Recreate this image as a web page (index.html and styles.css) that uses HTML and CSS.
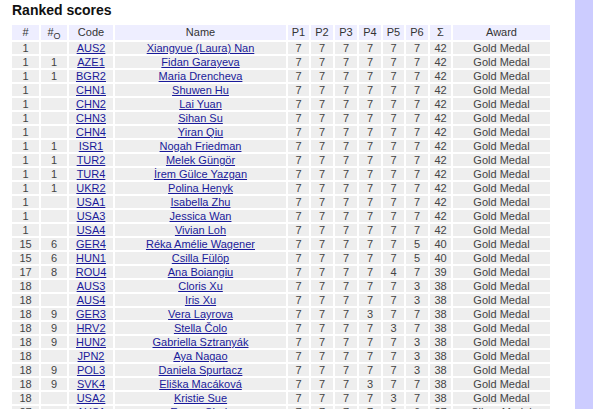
FILE: index.html
```html
<!DOCTYPE html>
<html lang="en">
<head>
<meta charset="utf-8">
<title>Ranked scores</title>
<link rel="stylesheet" href="styles.css">
</head>
<body>
<div class="page">
  <main class="main">
    <h2 class="title">Ranked scores</h2>
    <table class="scores">
      <colgroup>
        <col class="w-rank"><col class="w-rank-o"><col class="w-code"><col class="w-name">
        <col class="w-p1"><col class="w-p"><col class="w-p"><col class="w-p"><col class="w-p5"><col class="w-p"><col class="w-sum"><col class="w-award">
      </colgroup>
      <thead>
        <tr><th>#</th><th>#<sub>O</sub></th><th>Code</th><th>Name</th><th>P1</th><th>P2</th><th>P3</th><th>P4</th><th>P5</th><th>P6</th><th>Σ</th><th>Award</th></tr>
      </thead>
      <tbody>
        <tr><td>1</td><td></td><td><a href="#">AUS2</a></td><td><a href="#">Xiangyue (Laura) Nan</a></td><td>7</td><td>7</td><td>7</td><td>7</td><td>7</td><td>7</td><td>42</td><td>Gold Medal</td></tr>
        <tr><td>1</td><td>1</td><td><a href="#">AZE1</a></td><td><a href="#">Fidan Garayeva</a></td><td>7</td><td>7</td><td>7</td><td>7</td><td>7</td><td>7</td><td>42</td><td>Gold Medal</td></tr>
        <tr><td>1</td><td>1</td><td><a href="#">BGR2</a></td><td><a href="#">Maria Drencheva</a></td><td>7</td><td>7</td><td>7</td><td>7</td><td>7</td><td>7</td><td>42</td><td>Gold Medal</td></tr>
        <tr><td>1</td><td></td><td><a href="#">CHN1</a></td><td><a href="#">Shuwen Hu</a></td><td>7</td><td>7</td><td>7</td><td>7</td><td>7</td><td>7</td><td>42</td><td>Gold Medal</td></tr>
        <tr><td>1</td><td></td><td><a href="#">CHN2</a></td><td><a href="#">Lai Yuan</a></td><td>7</td><td>7</td><td>7</td><td>7</td><td>7</td><td>7</td><td>42</td><td>Gold Medal</td></tr>
        <tr><td>1</td><td></td><td><a href="#">CHN3</a></td><td><a href="#">Sihan Su</a></td><td>7</td><td>7</td><td>7</td><td>7</td><td>7</td><td>7</td><td>42</td><td>Gold Medal</td></tr>
        <tr><td>1</td><td></td><td><a href="#">CHN4</a></td><td><a href="#">Yiran Qiu</a></td><td>7</td><td>7</td><td>7</td><td>7</td><td>7</td><td>7</td><td>42</td><td>Gold Medal</td></tr>
        <tr><td>1</td><td>1</td><td><a href="#">ISR1</a></td><td><a href="#">Nogah Friedman</a></td><td>7</td><td>7</td><td>7</td><td>7</td><td>7</td><td>7</td><td>42</td><td>Gold Medal</td></tr>
        <tr><td>1</td><td>1</td><td><a href="#">TUR2</a></td><td><a href="#">Melek Güngör</a></td><td>7</td><td>7</td><td>7</td><td>7</td><td>7</td><td>7</td><td>42</td><td>Gold Medal</td></tr>
        <tr><td>1</td><td>1</td><td><a href="#">TUR4</a></td><td><a href="#">İrem Gülce Yazgan</a></td><td>7</td><td>7</td><td>7</td><td>7</td><td>7</td><td>7</td><td>42</td><td>Gold Medal</td></tr>
        <tr><td>1</td><td>1</td><td><a href="#">UKR2</a></td><td><a href="#">Polina Henyk</a></td><td>7</td><td>7</td><td>7</td><td>7</td><td>7</td><td>7</td><td>42</td><td>Gold Medal</td></tr>
        <tr><td>1</td><td></td><td><a href="#">USA1</a></td><td><a href="#">Isabella Zhu</a></td><td>7</td><td>7</td><td>7</td><td>7</td><td>7</td><td>7</td><td>42</td><td>Gold Medal</td></tr>
        <tr><td>1</td><td></td><td><a href="#">USA3</a></td><td><a href="#">Jessica Wan</a></td><td>7</td><td>7</td><td>7</td><td>7</td><td>7</td><td>7</td><td>42</td><td>Gold Medal</td></tr>
        <tr><td>1</td><td></td><td><a href="#">USA4</a></td><td><a href="#">Vivian Loh</a></td><td>7</td><td>7</td><td>7</td><td>7</td><td>7</td><td>7</td><td>42</td><td>Gold Medal</td></tr>
        <tr><td>15</td><td>6</td><td><a href="#">GER4</a></td><td><a href="#">Réka Amélie Wagener</a></td><td>7</td><td>7</td><td>7</td><td>7</td><td>7</td><td>5</td><td>40</td><td>Gold Medal</td></tr>
        <tr><td>15</td><td>6</td><td><a href="#">HUN1</a></td><td><a href="#">Csilla Fülöp</a></td><td>7</td><td>7</td><td>7</td><td>7</td><td>7</td><td>5</td><td>40</td><td>Gold Medal</td></tr>
        <tr><td>17</td><td>8</td><td><a href="#">ROU4</a></td><td><a href="#">Ana Boiangiu</a></td><td>7</td><td>7</td><td>7</td><td>7</td><td>4</td><td>7</td><td>39</td><td>Gold Medal</td></tr>
        <tr><td>18</td><td></td><td><a href="#">AUS3</a></td><td><a href="#">Cloris Xu</a></td><td>7</td><td>7</td><td>7</td><td>7</td><td>7</td><td>3</td><td>38</td><td>Gold Medal</td></tr>
        <tr><td>18</td><td></td><td><a href="#">AUS4</a></td><td><a href="#">Iris Xu</a></td><td>7</td><td>7</td><td>7</td><td>7</td><td>7</td><td>3</td><td>38</td><td>Gold Medal</td></tr>
        <tr><td>18</td><td>9</td><td><a href="#">GER3</a></td><td><a href="#">Vera Layrova</a></td><td>7</td><td>7</td><td>7</td><td>3</td><td>7</td><td>7</td><td>38</td><td>Gold Medal</td></tr>
        <tr><td>18</td><td>9</td><td><a href="#">HRV2</a></td><td><a href="#">Stella Čolo</a></td><td>7</td><td>7</td><td>7</td><td>7</td><td>3</td><td>7</td><td>38</td><td>Gold Medal</td></tr>
        <tr><td>18</td><td>9</td><td><a href="#">HUN2</a></td><td><a href="#">Gabriella Sztranyák</a></td><td>7</td><td>7</td><td>7</td><td>7</td><td>7</td><td>3</td><td>38</td><td>Gold Medal</td></tr>
        <tr><td>18</td><td></td><td><a href="#">JPN2</a></td><td><a href="#">Aya Nagao</a></td><td>7</td><td>7</td><td>7</td><td>7</td><td>7</td><td>3</td><td>38</td><td>Gold Medal</td></tr>
        <tr><td>18</td><td>9</td><td><a href="#">POL3</a></td><td><a href="#">Daniela Spurtacz</a></td><td>7</td><td>7</td><td>7</td><td>7</td><td>7</td><td>3</td><td>38</td><td>Gold Medal</td></tr>
        <tr><td>18</td><td>9</td><td><a href="#">SVK4</a></td><td><a href="#">Eliška Macáková</a></td><td>7</td><td>7</td><td>7</td><td>3</td><td>7</td><td>7</td><td>38</td><td>Gold Medal</td></tr>
        <tr><td>18</td><td></td><td><a href="#">USA2</a></td><td><a href="#">Kristie Sue</a></td><td>7</td><td>7</td><td>7</td><td>7</td><td>3</td><td>7</td><td>38</td><td>Gold Medal</td></tr>
        <tr><td>27</td><td></td><td><a href="#">AUS1</a></td><td><a href="#">Emma Shah</a></td><td>7</td><td>7</td><td>7</td><td>7</td><td>3</td><td>6</td><td>37</td><td>Silver Medal</td></tr>
      </tbody>
    </table>
  </main>
  <aside class="side"></aside>
</div>
</body>
</html>
```
FILE: styles.css
```css
html, body {
  margin: 0;
  padding: 0;
  background: #fff;
}

body {
  font-family: "Liberation Sans", Arial, sans-serif;
  color: #444;
  overflow: hidden;
}

.page {
  display: flex;
  min-height: 409px;
}

.main {
  flex: 1;
  padding-left: 12px;
}

.side {
  width: 18px;
  background: #ccccff;
}

.title {
  font-size: 14px;
  line-height: 16px;
  font-weight: bold;
  color: #111;
  margin: 2px 0 5px;
}

.scores {
  border-collapse: separate;
  border-spacing: 2px;
  table-layout: fixed;
  width: 542px;
  margin-left: -2px;
  font-size: 11px;
}

.w-rank { width: 27px; }
.w-rank-o { width: 26px; }
.w-code { width: 44px; }
.w-name { width: 171px; }
.w-p1 { width: 21px; }
.w-p { width: 22px; }
.w-p5 { width: 21px; }
.w-sum { width: 21px; }
.w-award { width: 97px; }

.scores th {
  padding: 0;
  height: 15px;
  line-height: 15px;
  background: #eeeeff;
  font-weight: normal;
  color: #333;
  text-align: center;
  white-space: nowrap;
}

.scores th sub {
  font-size: 9px;
  line-height: 0;
  vertical-align: -3px;
}

.scores td {
  padding: 0;
  height: 12px;
  line-height: 12px;
  background: #eeeeee;
  text-align: center;
  white-space: nowrap;
  overflow: hidden;
}

.scores a {
  color: #1a1a9a;
  text-decoration: underline;
}
```
